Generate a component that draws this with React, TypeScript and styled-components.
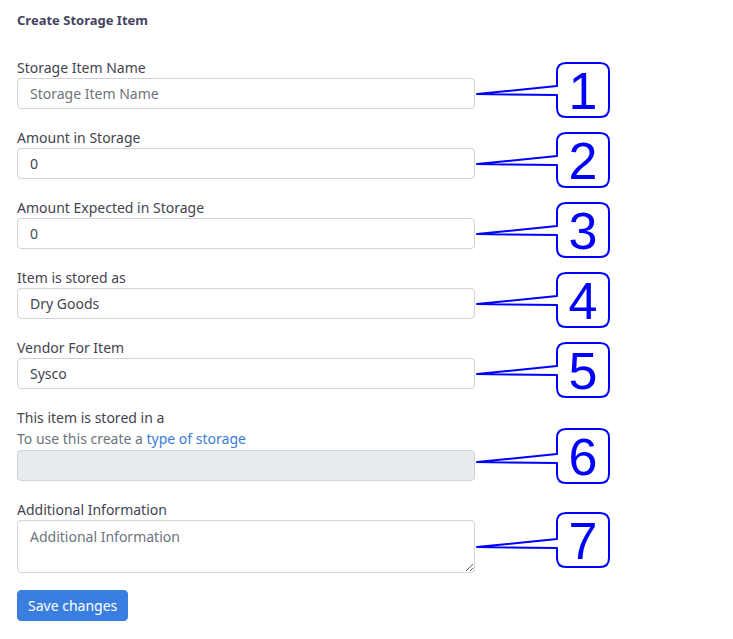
import React from 'react'
import styled, { createGlobalStyle } from 'styled-components'

const GlobalStyle = createGlobalStyle`
	html, body {
		margin: 0;
		padding: 0;
		background: #ffffff;
	}
	body {
		font-family: 'Noto Sans', 'Open Sans', sans-serif;
		color: #3b3b4a;
	}
`

const Page = styled.div`
	width: 733px;
	height: 639px;
	box-sizing: border-box;
	padding: 10px 17px 0;
	overflow: hidden;
`

const Title = styled.h1`
	margin: 0 0 27px;
	font-size: 13px;
	line-height: 20px;
	font-weight: 700;
	color: #45445f;
`

const Form = styled.form`
	display: flex;
	flex-direction: column;
	width: 458px;
`

const Group = styled.div<{ $last?: boolean }>`
	display: flex;
	flex-direction: column;
	margin-bottom: ${(p) => (p.$last ? '17px' : '18px')};
`

const Label = styled.label`
	font-size: 14px;
	line-height: 21px;
	color: #44444f;
`

const Help = styled.div`
	font-size: 14px;
	line-height: 22px;
	color: #6c757d;

	a {
		color: #3b7bd6;
		text-decoration: none;
	}
`

const FieldWrap = styled.div`
	position: relative;
`

const Input = styled.input<{ $disabled?: boolean }>`
	display: block;
	box-sizing: border-box;
	width: 100%;
	height: 31px;
	padding: 0 12px;
	font-family: inherit;
	font-size: 14px;
	color: #3f4650;
	background: ${(p) => (p.$disabled ? '#e9ecef' : '#ffffff')};
	border: 1px solid #ced4da;
	border-radius: 4px;
	outline: none;

	&::placeholder {
		color: #6c757d;
	}
`

const TextArea = styled.textarea`
	display: block;
	box-sizing: border-box;
	width: 100%;
	height: 53px;
	padding: 5px 12px;
	font-family: inherit;
	font-size: 14px;
	line-height: 21px;
	color: #3f4650;
	border: 1px solid #ced4da;
	border-radius: 4px;
	resize: vertical;
	outline: none;

	&::placeholder {
		color: #6c757d;
	}
`

const SaveButton = styled.button`
	align-self: flex-start;
	height: 31px;
	padding: 0 10px;
	font-family: inherit;
	font-size: 14px;
	color: #ffffff;
	background: #3a7fdf;
	border: 1px solid #3a7fdf;
	border-radius: 4px;
`

// annotation bubble drawn over the page, tip points at the field
const Callout = styled.svg<{ $dy: number }>`
	position: absolute;
	left: calc(100% + 2px);
	top: 50%;
	margin-top: ${(p) => -40 + p.$dy}px;
	overflow: visible;
`

// tip sits at y=40 in the svg; box top is `lift` px above the tip
const Marker = ({ n, dy = 0, lift = 31 }: { n: number; dy?: number; lift?: number }) => {
	const t = 40
	const top = t - lift
	const bottom = top + 54
	return (
		<Callout $dy={dy} width="134" height="100" viewBox="0 0 134 100">
			<path
				d={`M80,${t - 8} L80,${top + 9} Q80,${top} 89,${top} L123,${top} Q132,${top} 132,${top + 9} L132,${bottom - 9} Q132,${bottom} 123,${bottom} L89,${bottom} Q80,${bottom} 80,${bottom - 9} L80,${t + 1} L0,${t} Z`}
				fill="#ffffff"
				stroke="#0000ff"
				strokeWidth="2"
				strokeLinejoin="round"
			/>
			<text
				x="106"
				y={top + 46}
				textAnchor="middle"
				fontFamily="'Liberation Sans', Arial, sans-serif"
				fontSize="52"
				fill="#0000ff"
			>
				{n}
			</text>
		</Callout>
	)
}

const fields = [
	{ label: 'Storage Item Name', value: '', placeholder: 'Storage Item Name' },
	{ label: 'Amount in Storage', value: '0' },
	{ label: 'Amount Expected in Storage', value: '0' },
	{ label: 'Item is stored as', value: 'Dry Goods' },
	{ label: 'Vendor For Item', value: 'Sysco' },
]

export default function App() {
	return (
		<>
			<GlobalStyle />
			<Page>
				<Title>Create Storage Item</Title>
				<Form onSubmit={(e) => e.preventDefault()}>
					{fields.map((f, i) => (
						<Group key={i}>
							<Label>{f.label}</Label>
							<FieldWrap>
								<Input
									defaultValue={f.value}
									placeholder={f.placeholder}
								/>
								<Marker n={i + 1} />
							</FieldWrap>
						</Group>
					))}
					<Group>
						<Label>This item is stored in a</Label>
						<Help>
							To use this create a <a href="#">type of storage</a>
						</Help>
						<FieldWrap>
							<Input $disabled disabled />
							<Marker n={6} dy={-4} lift={33} />
						</FieldWrap>
					</Group>
					<Group $last>
						<Label>Additional Information</Label>
						<FieldWrap>
							<TextArea placeholder="Additional Information" />
							<Marker n={7} lift={34} />
						</FieldWrap>
					</Group>
					<SaveButton type="submit">Save changes</SaveButton>
				</Form>
			</Page>
		</>
	)
}
